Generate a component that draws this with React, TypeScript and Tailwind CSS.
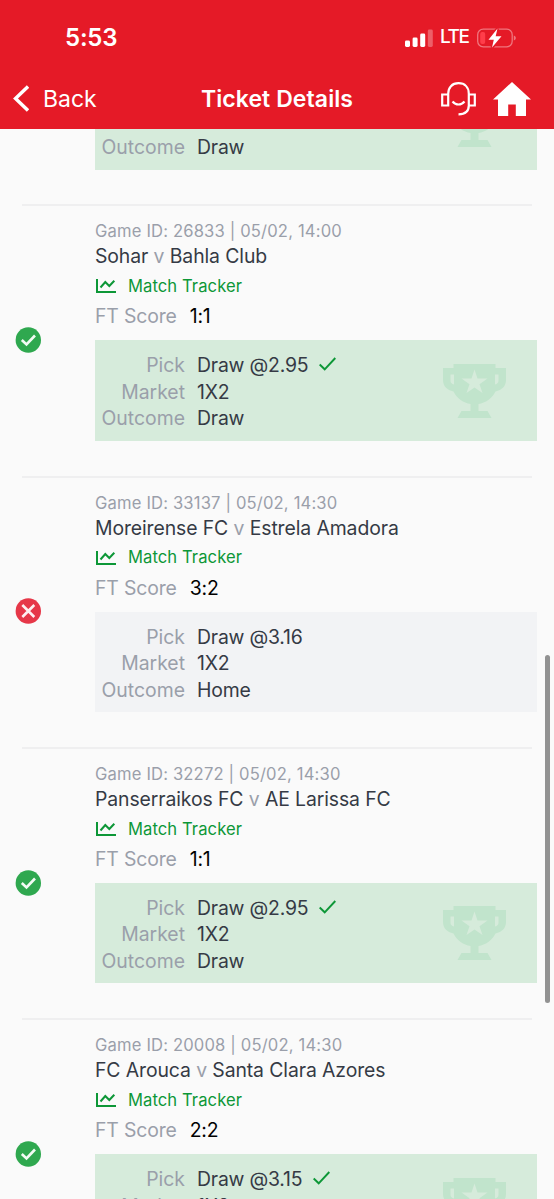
type Game = {
  id: string;
  time: string;
  home: string;
  away: string;
  score: string;
  odds: string;
  outcome?: string;
  won: boolean;
};

const games: Game[] = [
  { id: '26833', time: '14:00', home: 'Sohar', away: 'Bahla Club', score: '1:1', odds: '2.95', outcome: 'Draw', won: true },
  { id: '33137', time: '14:30', home: 'Moreirense FC', away: 'Estrela Amadora', score: '3:2', odds: '3.16', outcome: 'Home', won: false },
  { id: '32272', time: '14:30', home: 'Panserraikos FC', away: 'AE Larissa FC', score: '1:1', odds: '2.95', outcome: 'Draw', won: true },
  { id: '20008', time: '14:30', home: 'FC Arouca', away: 'Santa Clara Azores', score: '2:2', odds: '3.15', won: true },
];

function Trophy() {
  return (
    <svg className="h-[54px] w-[63px] shrink-0" viewBox="0 0 63 54">
      <path
        fill="#c1e4cc"
        fillRule="evenodd"
        d="M10.500 0H52.500V4H63V16C63 22 59 26 52.500 27.500C49 34.500 42.500 39 35.500 40V47H44.500L48.500 54H14.500L18.500 47H27.500V40C20.500 39 14 34.500 10.500 27.500C4 26 0 22 0 16V4H10.500ZM7.500 10.500V16.500C7.500 18.500 8.500 20 11 20.500V10.500ZM52 10.500V20.500C54.500 20 55.500 18.500 55.500 16.500V10.500ZM31.500 5.500L28.500 14.500H18.500L26.500 20.300L23.500 29L31.500 23.500L39.500 29L36.500 20.300L44.500 14.500H34.500Z"
      />
    </svg>
  );
}

function StatusIcon({ won }: { won: boolean }) {
  return (
    <svg className="h-[26px] w-[26px]" viewBox="0 0 26 26" fill="none">
      <circle cx="13.300" cy="13" r="12.700" fill={won ? '#2fa84f' : '#e63748'} />
      {won ? (
        <path d="M6.800 13L11.500 17.500L20 8.500" stroke="#f2fbf4" strokeWidth="2.600" />
      ) : (
        <path d="M7.300 7L19.300 19M19.300 7L7.300 19" stroke="#fdeff0" strokeWidth="2.600" />
      )}
    </svg>
  );
}

function Field({ label, value, checked }: { label: string; value: string; checked?: boolean }) {
  return (
    <div className="flex h-[26.400px] items-center text-[19.400px]">
      <span className="w-[90px] text-right text-[#9a9faa]">{label}</span>
      <span className="ml-3 tracking-[-0.200px] text-[#353a45]">{value}</span>
      {checked && (
        <svg className="mb-[3px] ml-[11px] h-[14px] w-[17px]" viewBox="0 0 17 14" fill="none" stroke="#0d9737" strokeWidth="1.900">
          <path d="M0.700 7.500L5.700 12.300L16.300 1" />
        </svg>
      )}
    </div>
  );
}

function GameRow({ game }: { game: Game }) {
  return (
    <article className="ml-[15px] mr-[17px] flex h-[271.300px] items-center">
      <div className="w-20 shrink-0">
        <StatusIcon won={game.won} />
      </div>
      <div className="flex h-full min-w-0 flex-1 flex-col pt-[15.500px]">
        <div className="flex h-6 items-center text-[16.600px] tracking-[0.160px] text-[#9a9faa]">
          Game ID: {game.id} | 05/02, {game.time}
        </div>
        <div className="flex h-[26px] items-center whitespace-pre text-[19.400px] tracking-[-0.100px] text-[#353a45]">
          {game.home}
          <span className="text-[#9a9faa]"> v </span>
          {game.away}
        </div>
        <div className="flex h-[33px] items-center text-[16.600px] tracking-[0.080px] text-[#0d9737]">
          <svg className="ml-px h-[14px] w-5" viewBox="0 0 20 14" fill="none" stroke="currentColor" strokeWidth="2">
            <path d="M1 0V13H20M4.500 8.500L9.300 3L13.300 7L18.300 1.800" />
          </svg>
          <span className="ml-3">Match Tracker</span>
        </div>
        <div className="flex h-[28px] items-center text-[19.400px] tracking-[-0.150px] text-[#9a9faa]">
          FT Score
          <span className="ml-[13px] text-black">{game.score}</span>
        </div>
        <div
          className={
            game.won
              ? 'mt-[9.500px] flex h-[100.500px] items-center justify-between bg-[#d6ebdb] pr-[31px]'
              : 'mt-[9.500px] flex h-[100.500px] items-center justify-between bg-[#f2f3f5] pr-[31px]'
          }
        >
          <div className="h-full pt-[12.400px]">
            <Field label="Pick" value={`Draw @${game.odds}`} checked={game.won} />
            <Field label="Market" value="1X2" />
            {game.outcome && <Field label="Outcome" value={game.outcome} />}
          </div>
          {game.won && <Trophy />}
        </div>
      </div>
    </article>
  );
}

function Header() {
  return (
    <header className="h-[129px] shrink-0 bg-[#e51a27] text-white">
      <div className="flex h-[74px] items-center justify-between pl-[65px] pr-[37px] pt-px">
        <span className="text-[24px] font-semibold tracking-[-0.200px]">5:53</span>
        <div className="flex items-center">
          <svg className="h-[18px] w-7" viewBox="0 0 28 18" fill="white">
            <rect x="0" y="11.500" width="5" height="6.500" rx="1.400" />
            <rect x="7.600" y="8.500" width="5" height="9.500" rx="1.400" />
            <rect x="15.200" y="4.500" width="5" height="13.500" rx="1.400" />
            <rect x="22.800" y="0.500" width="5" height="17.500" rx="1.400" opacity="0.300" />
          </svg>
          <span className="ml-[7px] w-[29px] text-[19px] font-medium tracking-[-1.400px]">LTE</span>
          <svg className="ml-2 h-5 w-10" viewBox="0 0 40 20" fill="none">
            <rect x="0.700" y="1.200" width="34.500" height="17.600" rx="5.500" stroke="white" strokeOpacity="0.400" strokeWidth="1.300" />
            <path d="M36.800 7.500C39.500 8.500 39.500 11.500 36.800 12.500Z" fill="white" opacity="0.400" />
            <rect x="3.200" y="4" width="5" height="12" rx="2" fill="#ff3d4a" />
            <path d="M20.500 0.500L11.500 11.700H16.800L15 19.500L24.500 8.200H18.700Z" fill="white" stroke="#e51a27" strokeWidth="3" paintOrder="stroke" />
          </svg>
        </div>
      </div>
      <div className="grid h-[49px] grid-cols-[1fr_auto_1fr] items-center">
        <div className="flex items-center pl-[13px] text-[23px]">
          <svg className="h-[27px] w-4" viewBox="0 0 16 27" fill="none" stroke="white" strokeWidth="3.400">
            <path d="M15 1.500L2.500 13.500L15 25.500" />
          </svg>
          <span className="ml-[14px] pt-px">Back</span>
        </div>
        <h1 className="pt-px text-[23px] font-semibold tracking-[0.080px]">Ticket Details</h1>
        <div className="flex items-center justify-end pr-[23px]">
          <svg className="mr-px h-[34px] w-[35px]" viewBox="0 0 35 34" fill="none" stroke="white" strokeWidth="2.200">
            <path d="M1.200 12.500H7.200V23.500H1.200ZM27.800 12.500H33.800V23.500H27.800ZM7.200 13V11.800C7.200 5.500 11 1.200 17.500 1.200S27.800 5.500 27.800 11.800V23.500C27.800 29 24.500 32.200 17.500 32.300" />
            <path d="M11.500 19.500C15 23.500 20 23.500 23.500 19.500" />
          </svg>
          <svg className="ml-4 h-[34px] w-[38px]" viewBox="0 0 38 34" fill="white">
            <path d="M19 0L38 17.500H33V34H22.800V22.500H15.200V34H5V17.500H0Z" />
          </svg>
        </div>
      </div>
    </header>
  );
}

export default function App() {
  return (
    <div className="relative flex h-[1199px] w-[554px] flex-col overflow-hidden bg-[#fafafa] font-['Inter',sans-serif]">
      <Header />
      <main className="min-h-0 flex-1 overflow-hidden">
        <div className="h-[75.400px]">
          <div className="ml-[95px] mr-[17px] flex h-[41px] items-end justify-between overflow-hidden bg-[#d6ebdb] pr-[31px]">
            <div className="pb-[9.500px]">
              <Field label="Outcome" value="Draw" />
            </div>
            <div className="pb-[23px]">
              <Trophy />
            </div>
          </div>
        </div>
        {games.map((game) => (
          <div key={game.id}>
            <div className="-mb-[2px] ml-[22px] mr-[22px] h-[2px] bg-[#efeff0]" />
            <GameRow game={game} />
          </div>
        ))}
      </main>
      <div className="absolute left-[545px] top-[655px] h-[348px] w-[5px] rounded-full bg-[#929292]" />
    </div>
  );
}
